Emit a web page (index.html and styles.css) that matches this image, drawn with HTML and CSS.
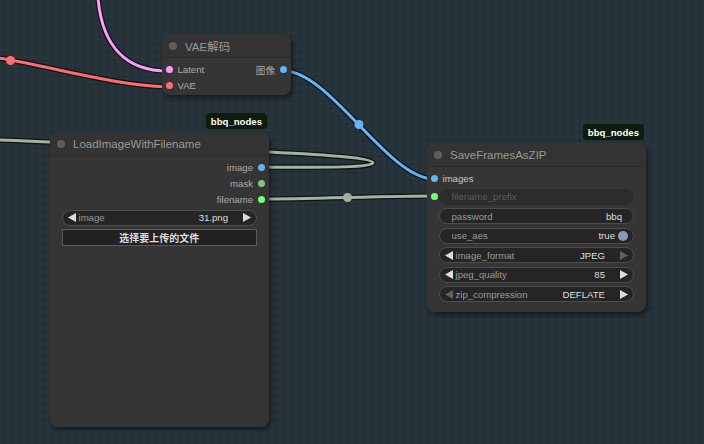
FILE: index.html
```html
<!DOCTYPE html>
<html>
<head>
<meta charset="utf-8">
<link rel="stylesheet" href="styles.css">
</head>
<body>
<div class="canvas">
  <svg class="links" width="704" height="444" viewBox="0 0 704 444">
    <g class="outline">
      <path d="M98,-2 C102,45 125,71 168,71"/>
      <path d="M-2,58 C50,66 110,85 168,87"/>
      <path d="M284,71 C330,71 388,179 434,179"/>
      <path d="M261,199 C304,199 391,196 434,196"/>
      <path d="M261,167 C330,168 373,167 373,163 C373,158 330,155 269,152 C150,148 60,142 -2,140"/>
    </g>
    <path class="ln pink" d="M98,-2 C102,45 125,71 168,71"/>
    <path class="ln red" d="M-2,58 C50,66 110,85 168,87"/>
    <path class="ln blue" d="M284,71 C330,71 388,179 434,179"/>
    <path class="ln grey" d="M261,199 C304,199 391,196 434,196"/>
    <path class="ln grey" d="M261,167 C330,168 373,167 373,163 C373,158 330,155 269,152 C150,148 60,142 -2,140"/>
    <circle class="mid red-f" cx="10.5" cy="60.5" r="4.5"/>
    <circle class="mid blue-f" cx="359" cy="124.5" r="4.5"/>
    <circle class="mid grey-f" cx="347.5" cy="197.5" r="4.5"/>
  </svg>

  <div class="node node-vae">
    <div class="title"><span class="tdot"></span><span class="ttext">VAE解码</span></div>
    <div class="body">
      <div class="pair">
        <div class="in"><span class="dot c-latent"></span><span>Latent</span></div>
        <div class="out"><span>图像</span><span class="dot c-image"></span></div>
      </div>
      <div class="pair">
        <div class="in"><span class="dot c-vae"></span><span>VAE</span></div>
      </div>
    </div>
  </div>

  <div class="node node-load">
    <div class="badge">bbq_nodes</div>
    <div class="title"><span class="tdot"></span><span class="ttext">LoadImageWithFilename</span></div>
    <div class="body">
      <div class="out"><span>image</span><span class="dot c-image"></span></div>
      <div class="out"><span>mask</span><span class="dot c-mask"></span></div>
      <div class="out"><span>filename</span><span class="dot c-string"></span></div>
      <div class="widgets">
        <div class="wrow"><div class="pill combo">
          <svg class="arr" width="8" height="9" viewBox="0 0 8 9"><polygon points="8,0 8,9 0,4.5"/></svg>
          <span class="wl">image</span><span class="wv">31.png</span>
          <svg class="arr" width="8" height="9" viewBox="0 0 8 9"><polygon points="0,0 0,9 8,4.5"/></svg>
        </div></div>
        <div class="wrow"><div class="button">选择要上传的文件</div></div>
      </div>
    </div>
  </div>

  <div class="node node-save">
    <div class="badge">bbq_nodes</div>
    <div class="title"><span class="tdot"></span><span class="ttext">SaveFramesAsZIP</span></div>
    <div class="body">
      <div class="in"><span class="dot c-image"></span><span class="lbl-hi">images</span></div>
      <div class="widgets">
        <div class="wrow has-dot"><span class="dot c-string"></span><div class="pill disabled"><span class="wl">filename_prefix</span></div></div>
        <div class="wrow"><div class="pill"><span class="wl">password</span><span class="wv">bbq</span></div></div>
        <div class="wrow"><div class="pill toggle"><span class="wl">use_aes</span><span class="wv">true</span><span class="knob"></span></div></div>
        <div class="wrow"><div class="pill combo">
          <svg class="arr" width="8" height="9" viewBox="0 0 8 9"><polygon points="8,0 8,9 0,4.5"/></svg>
          <span class="wl">image_format</span><span class="wv">JPEG</span>
          <svg class="arr off" width="8" height="9" viewBox="0 0 8 9"><polygon points="0,0 0,9 8,4.5"/></svg>
        </div></div>
        <div class="wrow"><div class="pill combo">
          <svg class="arr" width="8" height="9" viewBox="0 0 8 9"><polygon points="8,0 8,9 0,4.5"/></svg>
          <span class="wl">jpeg_quality</span><span class="wv">85</span>
          <svg class="arr" width="8" height="9" viewBox="0 0 8 9"><polygon points="0,0 0,9 8,4.5"/></svg>
        </div></div>
        <div class="wrow"><div class="pill combo">
          <svg class="arr off" width="8" height="9" viewBox="0 0 8 9"><polygon points="8,0 8,9 0,4.5"/></svg>
          <span class="wl">zip_compression</span><span class="wv">DEFLATE</span>
          <svg class="arr" width="8" height="9" viewBox="0 0 8 9"><polygon points="0,0 0,9 8,4.5"/></svg>
        </div></div>
      </div>
    </div>
  </div>
</div>
</body>
</html>
```

FILE: styles.css
```css
* { box-sizing: border-box; }
html, body { margin: 0; padding: 0; }
body {
  font-family: "Liberation Sans", Arial, "Noto Sans CJK SC", sans-serif;
  background: #27323a;
}
.canvas {
  position: relative;
  width: 704px;
  height: 444px;
  overflow: hidden;
  background-color: #28343c;
  background-image:
    linear-gradient(rgba(0,0,0,0.13) 1px, transparent 1px),
    linear-gradient(90deg, rgba(0,0,0,0.13) 1px, transparent 1px);
  background-size: 8px 8px;
  background-position: 3px 4px;
}
.links { position: absolute; left: 0; top: 0; }
.links path { fill: none; }
.outline path { stroke: rgba(10,14,18,0.85); stroke-width: 5.5; }
.ln { stroke-width: 3; }
.pink { stroke: #ff9cf9; }
.red { stroke: #ff6e6e; }
.blue { stroke: #64b5f6; }
.grey { stroke: #a3b29f; }
.mid { stroke: none; }
.red-f { fill: #ff6e6e; }
.blue-f { fill: #64b5f6; }
.grey-f { fill: #a3b29f; }

.node {
  position: absolute;
  background: #353535;
  border-radius: 8px;
  box-shadow: 2px 3px 4px rgba(0,0,0,0.45);
  display: flex;
  flex-direction: column;
}
.node-vae { left: 162px; top: 34px; width: 129px; height: 61px; }
.node-load { left: 50px; top: 132px; width: 219px; height: 295px; }
.node-save { left: 427px; top: 143px; width: 219px; height: 169px; }

.title {
  height: 24px;
  flex: none;
  display: flex;
  align-items: center;
  gap: 8px;
  padding-left: 7px;
  background: #333333;
  border-radius: 8px 8px 0 0;
  border-bottom: 1px solid #2b2b2b;
  color: #999999;
  font-size: 11.5px;
}
.tdot {
  width: 8px; height: 8px; border-radius: 50%;
  background: #5e5e5e;
  flex: none;
}
.body {
  padding-top: 3.5px;
  display: flex;
  flex-direction: column;
  font-size: 9.6px;
  color: #aaaaaa;
}
.pair { display: flex; justify-content: space-between; height: 16px; }
.in {
  height: 16px;
  display: flex;
  align-items: center;
  gap: 5px;
  padding-left: 3.5px;
}
.out {
  height: 16px;
  display: flex;
  align-items: center;
  justify-content: flex-end;
  gap: 5px;
  padding-right: 4px;
}
.dot { width: 7px; height: 7px; border-radius: 50%; flex: none; }
.c-latent { background: #ff9cf9; }
.c-vae { background: #ff6e6e; }
.c-image { background: #64b5f6; }
.c-mask { background: #81c784; }
.c-string { background: #77ff77; }
.lbl-hi { color: #c8c8c8; }

.widgets {
  display: flex;
  flex-direction: column;
  gap: 3.5px;
  margin-top: 2px;
}
.wrow {
  display: flex;
  align-items: center;
  height: 16px;
  padding: 0 12px 0 11.5px;
}
.wrow.has-dot { padding-left: 3.5px; gap: 1px; }
.pill {
  flex: 1;
  height: 16px;
  border-radius: 8px;
  background: #252525;
  border: 1px solid #4c4c4c;
  display: flex;
  align-items: center;
  padding: 0 11px 0 12px;
  font-size: 9.6px;
}
.pill.disabled { background: #2c2c2c; border-color: #2c2c2c; }
.pill.disabled .wl { color: #5c5c5c; }
.wl { color: #999999; flex: 1; white-space: nowrap; }
.wv { color: #dddddd; white-space: nowrap; }
.pill.combo { padding: 0 5px 0 5px; }
.pill.combo .wl { margin-left: 3px; }
.pill.combo .wv { margin-right: 15px; }
.arr { flex: none; fill: #dddddd; }
.arr.off { fill: #5f5f5f; }
.pill.toggle { padding-right: 5px; }
.knob {
  width: 10px; height: 10px; border-radius: 50%;
  background: #8a9aae;
  margin-left: 3px;
  flex: none;
}
.button {
  flex: 1;
  height: 17px;
  background: #222222;
  border: 1px solid #5a5a5a;
  color: #dddddd;
  font-family: "Noto Sans CJK SC", sans-serif;
  font-weight: 700;
  font-size: 10px;
  display: flex;
  align-items: center;
  justify-content: center;
}
.badge {
  position: absolute;
  right: 2px;
  top: -19px;
  height: 16px;
  padding: 0 5px;
  border-radius: 4px;
  background: #0e1c0e;
  color: #ffffff;
  font-weight: 700;
  font-size: 9.6px;
  display: flex;
  align-items: center;
}
```
